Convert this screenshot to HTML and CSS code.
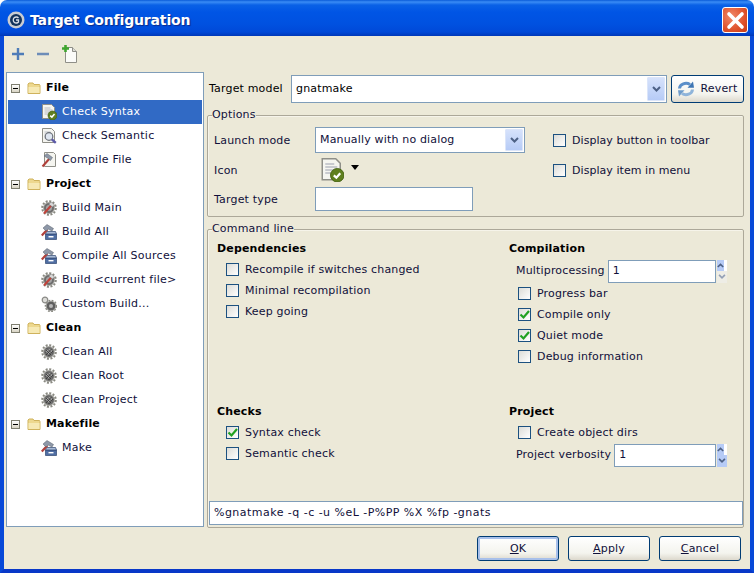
FILE: index.html
```html
<!DOCTYPE html>
<html>
<head>
	<meta charset="utf-8">
	<title>Target Configuration</title>
	<link rel="stylesheet" href="styles.css">
</head>
<body>
<svg class="defs" width="0" height="0">
	<symbol id="folder" viewBox="0 0 14 14">
		<path d="M1 12.500V3l1-1h4l1 1.500h5.500l.5 1v8z" fill="#edd88e" stroke="#cfb25c"/>
		<path d="M1.500 12V6h11v6z" fill="#f6e9b4"/>
	</symbol>
	<symbol id="doc" viewBox="0 0 16 16">
		<path d="M1.500 .5h9l3 3v11h-12z" fill="#f5f5f0" stroke="#8f8f88"/>
		<path d="M3.500 4h6M3.500 6h8M3.500 8h8M3.500 10h6" stroke="#b9bcc4"/>
	</symbol>
	<symbol id="check-doc" viewBox="0 0 16 16">
		<use href="#doc"/>
		<circle cx="11.500" cy="11.500" r="4.500" fill="#5f7f1f" stroke="#42600f" stroke-width=".6"/>
		<path d="M9.200 11.600l1.700 1.500 2.600-3" fill="none" stroke="#fff" stroke-width="1.500"/>
	</symbol>
	<symbol id="find-doc" viewBox="0 0 16 16">
		<use href="#doc"/>
		<circle cx="8" cy="8.500" r="3.800" fill="#dfe6f0" stroke="#6b7078" stroke-width="1.200"/>
		<path d="M10.800 11.300l4 3.500" stroke="#5c5aa8" stroke-width="2.400"/>
	</symbol>
	<symbol id="hammer-doc" viewBox="0 0 16 16">
		<path d="M3.500 .5h9l2 2v12h-11z" fill="#f5f5f0" stroke="#8f8f88"/>
		<path d="M1.500 14.500l7-8" stroke="#b0403a" stroke-width="2"/>
		<path d="M3 4l3-2.500 5.500 4-2 3-3-2.500z" fill="#8e98a8" stroke="#5c6470" stroke-width=".5"/>
	</symbol>
	<symbol id="gear" viewBox="0 0 16 16">
		<circle cx="8" cy="8" r="5.500" fill="#6d6d6d" stroke="#b2b2ac" stroke-width="1"/>
		<circle cx="8" cy="8" r="6.800" fill="none" stroke="#8a8a82" stroke-width="2" stroke-dasharray="2 1.560"/>
		<circle cx="8" cy="8" r="3" fill="#a5a5a5"/>
	</symbol>
	<symbol id="gear-build" viewBox="0 0 16 16">
		<use href="#gear"/>
		<path d="M3 13.500l8-9" stroke="#c0423a" stroke-width="2"/>
		<path d="M7.500 4l3-2 3 3-2 2z" fill="#d8d8d8" stroke="#666" stroke-width=".5"/>
	</symbol>
	<symbol id="gear-clean" viewBox="0 0 16 16">
		<use href="#gear"/>
		<path d="M5 6l5 5M6 4.500l5 5M4.500 8l4 4M10.500 5l-5.500 6M12 7l-4 4.500" stroke="#2f2f2f" stroke-width=".8"/>
	</symbol>
	<symbol id="box-build" viewBox="0 0 16 16">
		<path d="M4.500 10h11v5.500h-11z" fill="#4f6ea3" stroke="#2f4670" stroke-width=".7"/>
		<path d="M5.500 7.500h9l1 2.500h-11z" fill="#a8bad6" stroke="#2f4670" stroke-width=".7"/>
		<path d="M7.500 12.700h5" stroke="#fff" stroke-width="1.400"/>
		<path d="M.8 11.500l5.500-6" stroke="#b0403a" stroke-width="2.200"/>
		<path d="M2 4l4-3.500 6.500 4-1.500 2.500-4-2-2 2z" fill="#8e98a8" stroke="#565e6a" stroke-width=".5"/>
	</symbol>
	<symbol id="gears" viewBox="0 0 16 16">
		<circle cx="4" cy="4" r="2.800" fill="#dcdcd8" stroke="#8a8a86" stroke-width="1.200"/>
		<circle cx="10" cy="10" r="4.800" fill="#5f5f5f" stroke="#a0a09c" stroke-width=".8"/>
		<circle cx="10" cy="10" r="5.600" fill="none" stroke="#8a8a82" stroke-width="1.400" stroke-dasharray="1.800 1.500"/>
		<circle cx="10" cy="10" r="2" fill="#b8b8b8"/>
	</symbol>
	<symbol id="chev" viewBox="0 0 9 6">
		<path d="M1 1l3.500 3.500L8 1" fill="none" stroke="#4d6185" stroke-width="2"/>
	</symbol>
	<symbol id="tick" viewBox="0 0 11 11">
		<path d="M1.500 5.500l3 3 5.500-6.500" fill="none" stroke="#21a121" stroke-width="2.200"/>
	</symbol>
</svg>

<div class="window">
	<div class="titlebar">
		<svg class="logo" width="18" height="18" viewBox="0 0 18 18">
			<circle cx="9" cy="9" r="8.500" fill="#c9ccd2"/>
			<circle cx="9" cy="9" r="6" fill="#12335c"/>
			<path d="M11.500 7a3 3 0 1 0 0 4V9H9" fill="none" stroke="#d8dde6" stroke-width="1.300"/>
		</svg>
		<span class="title">Target Configuration</span>
		<div class="close">
			<svg width="21" height="21" viewBox="0 0 21 21"><path d="M4 4l13 13M17 4L4 17" stroke="#fff" stroke-width="3.600" stroke-linecap="round"/></svg>
		</div>
	</div>

	<div class="client">
		<div class="toolbar">
			<svg width="12" height="12" viewBox="0 0 12 12"><path d="M6 0v12M0 6h12" stroke="#4e7cb8" stroke-width="2.400"/></svg>
			<svg width="12" height="12" viewBox="0 0 12 12"><path d="M0 6h12" stroke="#6d8db8" stroke-width="2.400"/></svg>
			<svg width="16" height="18" viewBox="0 0 16 18">
				<path d="M3.500 2.500h7l4 4v11h-11z" fill="#fbfbf8" stroke="#8f8f88"/>
				<path d="M10.500 2.500v4h4" fill="#dcdcd6" stroke="#8f8f88"/>
				<path d="M3.500 0v7M0 3.500h7" stroke="#3fa52f" stroke-width="2.600"/>
			</svg>
		</div>

		<div class="main">
			<div class="tree">
				<div class="node group"><span class="toggle"></span><svg class="folder"><use href="#folder"/></svg>File</div>
				<div class="node leaf selected"><svg class="ic"><use href="#check-doc"/></svg>Check Syntax</div>
				<div class="node leaf"><svg class="ic"><use href="#find-doc"/></svg>Check Semantic</div>
				<div class="node leaf"><svg class="ic"><use href="#hammer-doc"/></svg>Compile File</div>
				<div class="node group"><span class="toggle"></span><svg class="folder"><use href="#folder"/></svg>Project</div>
				<div class="node leaf"><svg class="ic"><use href="#gear-build"/></svg>Build Main</div>
				<div class="node leaf"><svg class="ic"><use href="#box-build"/></svg>Build All</div>
				<div class="node leaf"><svg class="ic"><use href="#box-build"/></svg>Compile All Sources</div>
				<div class="node leaf"><svg class="ic"><use href="#gear-build"/></svg>Build &lt;current file&gt;</div>
				<div class="node leaf"><svg class="ic"><use href="#gears"/></svg>Custom Build...</div>
				<div class="node group"><span class="toggle"></span><svg class="folder"><use href="#folder"/></svg>Clean</div>
				<div class="node leaf"><svg class="ic"><use href="#gear-clean"/></svg>Clean All</div>
				<div class="node leaf"><svg class="ic"><use href="#gear-clean"/></svg>Clean Root</div>
				<div class="node leaf"><svg class="ic"><use href="#gear-clean"/></svg>Clean Project</div>
				<div class="node group"><span class="toggle"></span><svg class="folder"><use href="#folder"/></svg>Makefile</div>
				<div class="node leaf"><svg class="ic"><use href="#box-build"/></svg>Make</div>
			</div>

			<div class="panel">
				<div class="model-row">
					<span class="model-label">Target model</span>
					<div class="combo model-combo"><span>gnatmake</span><span class="drop"><svg width="9" height="6"><use href="#chev"/></svg></span></div>
					<div class="btn revert">
						<svg width="18" height="18" viewBox="0 0 18 18">
							<path d="M2.500 8.500A6.500 5.500 0 0 1 13 4.500" fill="none" stroke="#5b8fc9" stroke-width="3"/>
							<path d="M10.500 7.800h6.500L16 1.500z" fill="#3f76b4"/>
							<path d="M15.500 9.500A6.500 5.500 0 0 1 5 13.500" fill="none" stroke="#8fb4da" stroke-width="3"/>
							<path d="M7.500 10.200H1L2 16.500z" fill="#6f9ccb"/>
						</svg>
						Revert
					</div>
				</div>

				<fieldset class="options">
					<legend>Options</legend>
					<div class="opt-grid">
						<span>Launch mode</span>
						<div class="combo launch-combo"><span>Manually with no dialog</span><span class="drop"><svg width="9" height="6"><use href="#chev"/></svg></span></div>
						<label class="check display-check"><span class="box"></span>Display button in toolbar</label>
						<span>Icon</span>
						<div class="icon-pick">
							<svg width="24" height="24"><use href="#check-doc"/></svg>
							<span class="arrow"></span>
						</div>
						<label class="check display-check"><span class="box"></span>Display item in menu</label>
						<span>Target type</span>
						<div class="field type-field"></div>
					</div>
				</fieldset>

				<fieldset class="cmdline">
					<legend>Command line</legend>
					<div class="switches">
						<section class="sw-group">
							<h4>Dependencies</h4>
							<label class="check"><span class="box"></span>Recompile if switches changed</label>
							<label class="check"><span class="box"></span>Minimal recompilation</label>
							<label class="check"><span class="box"></span>Keep going</label>
						</section>
						<section class="sw-group right">
							<h4>Compilation</h4>
							<div class="spin-row"><span>Multiprocessing</span><div class="field spin-field">1</div>
								<div class="spin"><span class="up"><svg width="9" height="6"><use href="#chev"/></svg></span><span class="down off"><svg width="9" height="6"><use href="#chev"/></svg></span></div>
							</div>
							<label class="check"><span class="box"></span>Progress bar</label>
							<label class="check"><span class="box"><svg width="11" height="11"><use href="#tick"/></svg></span>Compile only</label>
							<label class="check"><span class="box"><svg width="11" height="11"><use href="#tick"/></svg></span>Quiet mode</label>
							<label class="check"><span class="box"></span>Debug information</label>
						</section>
						<section class="sw-group">
							<h4>Checks</h4>
							<label class="check"><span class="box"><svg width="11" height="11"><use href="#tick"/></svg></span>Syntax check</label>
							<label class="check"><span class="box"></span>Semantic check</label>
						</section>
						<section class="sw-group right">
							<h4>Project</h4>
							<label class="check"><span class="box"></span>Create object dirs</label>
							<div class="spin-row"><span>Project verbosity</span><div class="field spin-field">1</div>
								<div class="spin"><span class="up"><svg width="9" height="6"><use href="#chev"/></svg></span><span class="down"><svg width="9" height="6"><use href="#chev"/></svg></span></div>
							</div>
						</section>
					</div>
					<div class="field cmd-field">%gnatmake -q -c -u %eL -P%PP %X %fp -gnats</div>
				</fieldset>
			</div>
		</div>

		<div class="footer">
			<div class="btn default"><span><u>O</u>K</span></div>
			<div class="btn"><span><u>A</u>pply</span></div>
			<div class="btn"><span><u>C</u>ancel</span></div>
		</div>
	</div>
</div>
</body>
</html>
```

FILE: styles.css
```css
* { margin: 0; padding: 0; box-sizing: border-box; }
html, body { width: 754px; height: 573px; overflow: hidden; background: #fff; }
body { font: 11px/14px "DejaVu Sans", sans-serif; letter-spacing: .17px; color: #000; }
.defs { display: block; height: 0; }

.window { width: 754px; height: 573px; display: flex; flex-direction: column; border-radius: 7px 7px 0 0; overflow: hidden; }

/* title bar */
.titlebar {
	height: 36px; flex: none; display: flex; align-items: center; padding: 4px 5px 0 7px;
	background: linear-gradient(#0a5bd8 0, #3a8cf5 2px, #0a61e6 5px, #0055e5 12px, #0051e0 24px, #0049d8 32px, #0038b8 36px);
}
.logo { margin-right: 5px; flex: none; }
.title { flex: 1; color: #fff; font-weight: bold; font-size: 14px; letter-spacing: -.15px; text-shadow: 1px 1px 1px #0a2a8a; }
.close {
	width: 26px; height: 26px; margin-right: 1px; display: flex; align-items: center; justify-content: center;
	border: 1px solid #fff; border-radius: 3px; background: radial-gradient(circle at 35% 35%, #f0896a, #e0522c 60%, #c63c14);
}

/* client area */
.client {
	flex: 1; min-height: 0; display: flex; flex-direction: column; background: #ece9d8;
	border-left: 4px solid #0849d8; border-right: 4px solid #0849d8; border-bottom: 4px solid #0838c8;
}
.toolbar { height: 36px; flex: none; display: flex; align-items: center; gap: 13px; padding: 0 0 0 8px; }
.main { flex: 1; min-height: 0; display: flex; gap: 3px; padding-left: 2px; padding-right: 6px; }

/* tree */
.tree { width: 198px; flex: none; background: #fff; border: 1px solid #7f9db9; padding: 3px 1px 0; height: 455px; }
.node { height: 24px; display: flex; align-items: center; white-space: nowrap; color: #10103a; }
.node.group { font-weight: bold; color: #000; padding-left: 3px; }
.node.leaf { padding-left: 33px; letter-spacing: .25px; }
.node.selected { background: #316ac5; color: #fff; }
.toggle { width: 9px; height: 9px; border: 1px solid #7f7f70; background: linear-gradient(#fff, #d8d4c4); display: block; margin-right: 7px; position: relative; }
.toggle::after { content: ""; position: absolute; left: 1px; top: 3px; width: 5px; height: 1px; background: #000; }
.folder { width: 14px; height: 14px; margin-right: 5px; flex: none; }
.ic { width: 16px; height: 16px; margin-right: 5px; flex: none; }

/* right side */
.panel { flex: 1; min-width: 0; display: flex; flex-direction: column; }
.model-row { height: 30px; flex: none; margin-top: 2px; display: flex; align-items: center; }
.model-label { width: 84px; padding-left: 2px; flex: none; }

.combo { display: flex; align-items: center; justify-content: space-between; background: #fff; border: 1px solid #7f9db9; padding: 1px 1px 1px 4px; }
.model-combo { width: 376px; height: 28px; }
.launch-combo { width: 210px; height: 26px; }
.drop { width: 18px; align-self: stretch; display: flex; align-items: center; justify-content: center; background: linear-gradient(#d6e2fb, #b6cbf6); border: 1px solid #dbe5fa; border-radius: 1px; }
.drop svg { display: block; }

.btn {
	width: 82px; height: 25px; display: flex; align-items: center; justify-content: center;
	border: 1px solid #003c74; border-radius: 3px; background: linear-gradient(#fff, #f4f4ee 70%, #dcd8cc); color: #10103a;
}
.revert { width: 73px; height: 28px; margin-left: 4px; gap: 5px; }
.default { box-shadow: inset 0 0 0 2px #a8c0ea; }

fieldset { border: 1px solid #aca899; border-radius: 2px; box-shadow: inset 1px 1px 0 #f6f4ea; }
legend { margin-left: 4px; line-height: 14px; color: #10103a; }

.options { height: 109px; margin-top: 4px; flex: none; }
.opt-grid { display: grid; grid-template-columns: 101px 238px 1fr; grid-template-rows: 26px 34px 24px; align-items: center; margin-top: 5px; padding-left: 6px; color: #10103a; }
.opt-grid > span { padding-top: 2px; }
.icon-pick { display: flex; align-items: center; gap: 7px; padding-left: 5px; }
.arrow { width: 0; height: 0; border: 4px solid transparent; border-top: 5px solid #000; border-bottom: 0; margin-bottom: 5px; }
.field { background: #fff; border: 1px solid #7f9db9; padding: 0 4px; display: flex; align-items: center; color: #10103a; }
.type-field { width: 158px; height: 24px; }

.check { height: 21px; display: flex; align-items: center; gap: 6px; white-space: nowrap; color: #10103a; }
.display-check { letter-spacing: .05px; padding-top: 1px; }
.box { width: 13px; height: 13px; flex: none; border: 1px solid #1c5180; background: linear-gradient(135deg, #dcdcd7, #fff); display: flex; align-items: center; justify-content: center; }
.box svg { display: block; }

.cmdline { height: 306px; margin-top: 5px; flex: none; }
.switches { height: 265px; display: grid; grid-template-columns: 292px 1fr; grid-template-rows: 163px 1fr; padding: 6px 0 0 9px; }
.sw-group h4 { font-size: 11px; line-height: 14px; font-weight: bold; margin-bottom: 3px; }
.sw-group .check { margin-left: 9px; }
.spin-row { width: 218px; height: 24px; display: flex; align-items: center; padding-left: 7px; color: #10103a; }
.spin-row span:first-child { margin-right: 3px; }
.spin-field { height: 23px; flex: 1; }
.spin { width: 10px; height: 23px; margin-left: 1px; flex: none; display: flex; flex-direction: column; background: #fff; }
.spin span { flex: 1; margin: 0; display: flex; align-items: center; justify-content: center; background: #b6cbf6; }
.spin svg { width: 8px; height: 5px; }
.spin .up svg { transform: rotate(180deg); }
.spin .off { background: #e4e2d6; opacity: .6; }
.cmd-field { height: 24px; margin: 0 0 0 1px; letter-spacing: .47px; }

.footer { height: 42px; flex: none; display: flex; justify-content: flex-end; align-items: center; gap: 9px; padding: 1px 9px 0 0; }
```
